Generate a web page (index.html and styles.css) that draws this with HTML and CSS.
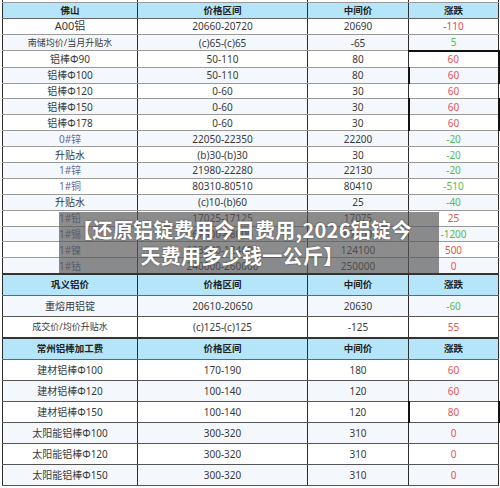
FILE: index.html
```html
<!DOCTYPE html>
<html lang="zh">
<head>
<meta charset="utf-8">
<link rel="stylesheet" href="styles.css">
</head>
<body>
<div class="page">
<table class="price">
<colgroup><col class="c1"><col class="c2"><col class="c3"><col class="c4"></colgroup>
<tr class="stub"><td></td><td></td><td></td><td></td></tr>
<tr class="head"><th>佛山</th><th>价格区间</th><th>中间价</th><th>涨跌</th></tr>
<tr class="r"><td class="big">A00铝</td><td>20660-20720</td><td>20690</td><td class="dn">-110</td></tr>
<tr class="r alt"><td class="sm">南储均价/当月升贴水</td><td>(c)65-(c)65</td><td>-65</td><td class="gr">5</td></tr>
<tr class="r"><td>铝棒Φ90</td><td>50-110</td><td>80</td><td class="up tk">60</td></tr>
<tr class="r alt"><td>铝棒Φ100</td><td>50-110</td><td>80</td><td class="up lk">60</td></tr>
<tr class="r"><td>铝棒Φ120</td><td>0-60</td><td>30</td><td class="up">60</td></tr>
<tr class="r alt"><td>铝棒Φ150</td><td>0-60</td><td>30</td><td class="up lk">60</td></tr>
<tr class="r"><td>铝棒Φ178</td><td>0-60</td><td>30</td><td class="up lk">60</td></tr>
<tr class="r alt"><td class="bl">0#锌</td><td>22050-22350</td><td>22200</td><td class="gr">-20</td></tr>
<tr class="r"><td>升贴水</td><td>(b)30-(b)30</td><td>30</td><td class="gr">-20</td></tr>
<tr class="r alt"><td class="bl">1#锌</td><td>21980-22280</td><td>22130</td><td class="gr">-20</td></tr>
<tr class="r"><td class="bl">1#铜</td><td>80310-80510</td><td>80410</td><td class="gr">-510</td></tr>
<tr class="r alt"><td>升贴水</td><td>(c)10-(b)60</td><td>25</td><td class="gr">-40</td></tr>
<tr class="r"><td class="bl">1#铅</td><td>17025-17125</td><td>17075</td><td class="up">25</td></tr>
<tr class="r alt"><td class="bl">1#锡</td><td>67800-68000</td><td>67900</td><td class="gr">-1200</td></tr>
<tr class="r"><td class="bl">1#镍</td><td>123600-124600</td><td>124100</td><td class="up">500</td></tr>
<tr class="r alt"><td class="bl">1#钴</td><td>240000-260000</td><td>250000</td><td class="up">0</td></tr>
<tr class="head tall"><th>巩义铝价</th><th>价格区间</th><th>中间价</th><th>涨跌</th></tr>
<tr class="t alt"><td>重熔用铝锭</td><td>20610-20650</td><td>20630</td><td class="gr">-60</td></tr>
<tr class="t"><td class="sm">成交价/均价升贴水</td><td>(c)125-(c)125</td><td>-125</td><td class="up">55</td></tr>
<tr class="head tall"><th>常州铝棒加工费</th><th>价格区间</th><th>中间价</th><th>涨跌</th></tr>
<tr class="t"><td>建材铝棒Φ100</td><td>170-190</td><td>180</td><td class="up">60</td></tr>
<tr class="t alt"><td>建材铝棒Φ120</td><td>100-140</td><td>120</td><td class="up">60</td></tr>
<tr class="t"><td>建材铝棒Φ150</td><td>100-140</td><td>120</td><td class="up lk">80</td></tr>
<tr class="t alt"><td>太阳能铝棒Φ100</td><td>300-320</td><td>310</td><td class="up">0</td></tr>
<tr class="t"><td>太阳能铝棒Φ120</td><td>300-320</td><td>310</td><td class="up">0</td></tr>
<tr class="t alt"><td>太阳能铝棒Φ150</td><td>300-320</td><td>310</td><td class="up">0</td></tr>
</table>
<div class="banner"><p>【还原铝锭费用今日费用,2026铝锭今<br>天费用多少钱一公斤】</p></div>
</div>
</body>
</html>
```

FILE: styles.css
```css
html, body {
  margin: 0;
  padding: 0;
  background: #ffffff;
}
.page {
  position: relative;
  width: 500px;
  height: 488px;
  overflow: hidden;
  font-family: "Noto Sans", "Noto Sans CJK SC", sans-serif;
}
.price {
  margin-left: 2px;
  width: 496px;
  border-collapse: collapse;
  table-layout: fixed;
  color: #3a3a3a;
  font-size: 10px;
}
.c1 { width: 135px; }
.c2 { width: 170px; }
.c3 { width: 101px; }
.c4 { width: 90px; }
.price td, .price th {
  padding: 0;
  text-align: center;
  vertical-align: middle;
  border-left: 1px solid #2e2e2e;
  border-right: 1px solid #2e2e2e;
  border-top: 1px solid #9a9a9a;
  border-bottom: 1px solid #9a9a9a;
  white-space: nowrap;
  overflow: hidden;
  line-height: 12px;
}
.stub td { height: 2px; border-top: none; }
.head th {
  height: 15px;
  background: #b5e5f8;
  color: #222;
  font-weight: bold;
  font-size: 9.5px;
  border-top: 1px solid #666;
  border-bottom: 1px solid #666;
}
.r td { height: 14.9px; }
.t td { height: 20px; border-top: 1px solid #555; border-bottom: 1px solid #555; }
.head.tall th { height: 20px; border-top: 2px solid #333; }
.alt td { background: #f4f8fc; }
.big { font-size: 11px; }
.sm { font-size: 9px; }
.bl { color: #5d6c9c; }
.dn { color: #e04565; }
.up { color: #e25555; }
.gr { color: #57b957; }
.price td.lk { border-left: 2px solid #111; border-right: 2px solid #111; }
.price td.tk { border-top: 2px solid #111; border-right: 2px solid #111; }
.banner {
  position: absolute;
  left: 59px;
  top: 212px;
  width: 366px;
  height: 61px;
  padding-right: 14px;
  background: rgba(85, 85, 85, 0.68);
  display: flex;
  align-items: center;
  justify-content: center;
}
.banner p {
  margin: 0;
  color: #ffffff;
  font-family: "Noto Sans CJK SC", sans-serif;
  font-weight: bold;
  font-size: 20px;
  line-height: 26px;
  letter-spacing: 0.3px;
  text-align: center;
  white-space: nowrap;
  text-shadow: 0 0 2px rgba(0,0,0,0.5);
}
```
